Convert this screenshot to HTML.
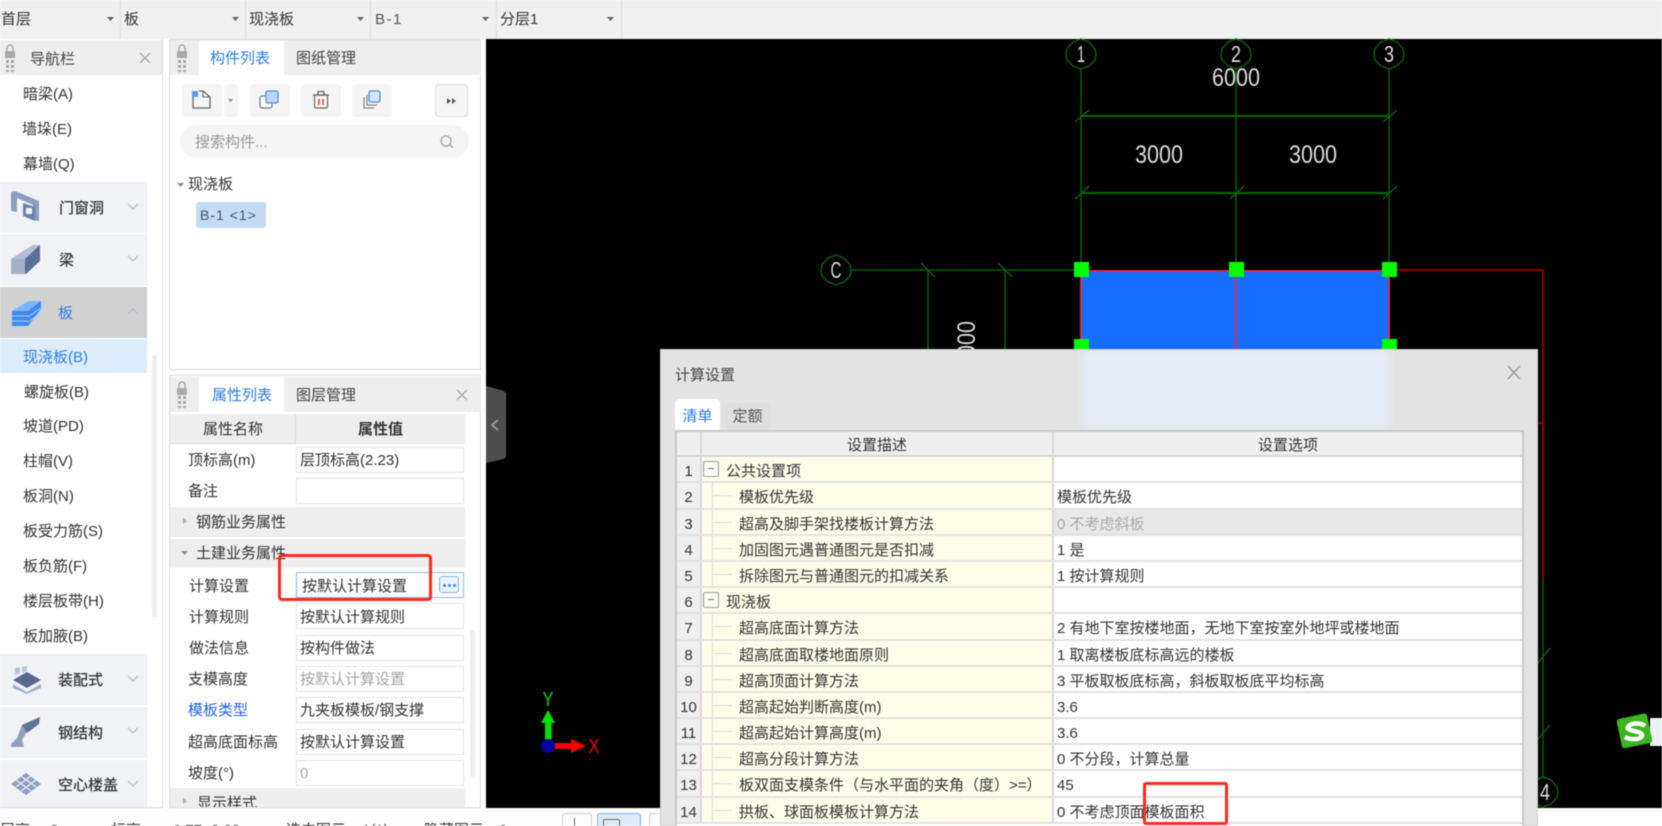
<!DOCTYPE html>
<html lang="zh"><head><meta charset="utf-8"><title>计算设置</title>
<style>
*{box-sizing:border-box}
html,body{margin:0;padding:0;width:1662px;height:826px;overflow:hidden;background:#fff}
html{background:#fff}
body{position:relative;font:15px/20px "Liberation Sans","Noto Sans CJK SC",sans-serif;color:#333;filter:blur(.4px)}
.a{position:absolute;white-space:nowrap}
.t{position:absolute;white-space:nowrap;height:20px;line-height:20px}
svg{position:absolute;overflow:visible}
.sep{position:absolute;top:0;width:1px;height:39px;background:#ddd}
.cat{position:absolute;left:0;width:147px;height:51px;background:#f0f2f6}
.inp{position:absolute;left:296px;width:168px;height:26px;background:#fff;border:1.5px solid #e4e4e4;padding-left:3px;line-height:25px;white-space:nowrap}
.grp{position:absolute;left:170px;width:295px;background:#eee}
.btn{position:absolute;top:84px;height:33px;background:#f5f5f5;border-radius:4px}
.row{display:flex;height:26.2px;border-bottom:2px solid #e2e2e2;line-height:29px;white-space:nowrap;overflow:hidden}
.n{width:25px;background:#efefef;border-right:2px solid #d6d6d6;text-align:center;flex:none}
.d{width:352px;background:#fffde8;border-right:2px solid #d6d6d6;flex:none;padding-left:37px;position:relative}
.d.g{padding-left:24px}
.d:not(.g):before{content:"";position:absolute;left:10px;top:12px;width:20px;height:1px;background:#ddd}
.d:not(.g):after{content:"";position:absolute;left:10px;top:0;width:1px;height:27px;background:#ddd}
.d.g i{position:absolute;left:1px;top:4px;width:16px;height:16px;border:1px solid #999;border-radius:2px;background:#fdfdf6}
.d.g i:before{content:"";position:absolute;left:4px;top:6px;width:6px;height:1px;background:#666}
.v{flex:1;background:#fff;padding-left:3px}
</style></head><body>

<!-- top bar -->
<div class="a" style="left:0;top:0;width:1662px;height:39px;background:#f0f0f0"></div>
<div class="sep" style="left:120px"></div><div class="sep" style="left:245px"></div><div class="sep" style="left:370px"></div><div class="sep" style="left:496px"></div><div class="sep" style="left:621px"></div>
<div class="t" style="left:1px;top:10px">首层</div>
<div class="t" style="left:124px;top:10px">板</div>
<div class="t" style="left:249px;top:10px">现浇板</div>
<div class="t" style="left:375px;top:10px;letter-spacing:1.5px;color:#555">B-1</div>
<div class="t" style="left:500px;top:10px">分层1</div>
<svg width="1662" height="39" style="left:0;top:0"><g fill="#5d6470">
<path d="M107 17h7l-3.500 4z"/><path d="M232 17h7l-3.500 4z"/><path d="M357 17h7l-3.500 4z"/><path d="M482 17h7l-3.500 4z"/><path d="M607 17h7l-3.500 4z"/></g></svg>

<!-- CAD viewport -->
<div class="a" style="left:486px;top:39px;width:1176px;height:769px;background:#000"></div>
<svg width="1662" height="826" style="left:0;top:0">
<g fill="none" stroke="#0b680b" stroke-width="1.300">
<polygon points="1081,39 1089,42 1095,49 1096,54 1095,60 1089,66 1081,69 1073,66 1067,60 1066,54 1067,49 1073,42"/>
<polygon points="1236,39 1244,42 1250,49 1251,54 1250,60 1244,66 1236,69 1228,66 1222,60 1221,54 1222,49 1228,42"/>
<polygon points="1389,39 1397,42 1403,49 1404,54 1403,60 1397,66 1389,69 1381,66 1375,60 1374,54 1375,49 1381,42"/>
<polygon points="836,255 844,258 850,265 851,270 850,276 844,282 836,285 828,282 822,276 821,270 822,265 828,258"/>
<polygon points="1543,777 1551,780 1557,787 1558,792 1557,798 1551,804 1543,807 1535,804 1529,798 1528,792 1529,787 1535,780"/>
<path d="M1081 69V270M1236 69V270M1389 69V270M851 270H1081M928 270V350M1005 270V350"/>
<path d="M1081 116H1389M1081 193H1389" stroke-width="2"/>
<path d="M1075 122L1089 110M1383 122L1397 110M1075 199L1089 186M1230 199L1244 186M1383 199L1397 186M921 263L935 277M998 263L1012 277"/>
<path d="M1543 578V777M1537 664L1550 648M1537 740L1550 725"/>
</g>
<g fill="#dcdcdc" font-family="Liberation Sans,sans-serif" font-size="25" text-anchor="middle">
<text x="1081" y="62" font-size="23" textLength="8" lengthAdjust="spacingAndGlyphs">1</text><text x="1236" y="62" font-size="23" textLength="10" lengthAdjust="spacingAndGlyphs">2</text><text x="1389" y="62" font-size="23" textLength="10" lengthAdjust="spacingAndGlyphs">3</text><text x="836" y="278" font-size="23" textLength="11" lengthAdjust="spacingAndGlyphs">C</text><text x="1545" y="800" font-size="23" textLength="10" lengthAdjust="spacingAndGlyphs">4</text>
<text x="1236" y="86" textLength="48" lengthAdjust="spacingAndGlyphs">6000</text>
<text x="1159" y="163" textLength="48" lengthAdjust="spacingAndGlyphs">3000</text>
<text x="1313" y="163" textLength="48" lengthAdjust="spacingAndGlyphs">3000</text>
<text transform="translate(975,347) rotate(-90)" text-anchor="start" x="-22" textLength="48" lengthAdjust="spacingAndGlyphs">6000</text>
</g>
<rect x="1081" y="270" width="308" height="82" fill="#166dff"/>
<path d="M1081 271H1389M1081 270V352M1236 270V352M1389 270V352" fill="none" stroke="#d5304a" stroke-width="2"/>
<path d="M1389 270H1543V578M1538 423H1543" fill="none" stroke="#b00000" stroke-width="1.500"/>
<g fill="#00ff00"><rect x="1074" y="262" width="15" height="15"/><rect x="1229" y="262" width="15" height="15"/><rect x="1382" y="262" width="15" height="15"/><rect x="1074" y="339" width="15" height="15"/><rect x="1382" y="339" width="15" height="15"/></g>
<!-- axes -->
<path d="M545 746V723H541L548 710L555 723H551.500V746z" fill="#00e000"/>
<path d="M548 743H571V739L586 746L571 753V749H548z" fill="#f00000"/>
<circle cx="548" cy="746" r="7" fill="#0000a0"/>
<text x="548" y="706" fill="#00d000" font-family="Liberation Sans,sans-serif" font-size="20" text-anchor="middle" textLength="11" lengthAdjust="spacingAndGlyphs">Y</text>
<text x="594" y="753" fill="#f00000" font-family="Liberation Sans,sans-serif" font-size="20" text-anchor="middle" textLength="11" lengthAdjust="spacingAndGlyphs">X</text>
<path d="M486 386L504 391L506 393V457L504 459L486 463z" fill="#4d4d4d"/>
<path d="M498 420L492 425L498 430" fill="none" stroke="#9a9a9a" stroke-width="1.800"/>
<!-- S logo -->
<rect x="1650" y="718" width="12" height="28" fill="#eef2f7"/>
<rect x="1619" y="716" width="31" height="30" rx="3" fill="#3cb521" transform="rotate(-12 1634 731)"/>
<path d="M1645 726C1640 722 1630 723 1628 727C1626 732 1643 730 1642 736C1640 740 1630 740 1625 737" fill="none" stroke="#fff" stroke-width="4.500"/>
</svg>

<!-- nav panel -->
<div class="a" style="left:0;top:39px;width:163px;height:769px;background:#fff;border-right:1.500px solid #ddd;border-bottom:1.500px solid #ddd"></div>
<div class="a" style="left:0;top:40px;width:162px;height:35px;background:#eee"></div>
<div class="t" style="left:30px;top:50px;color:#444">导航栏</div>
<div class="t" style="left:23px;top:85px">暗梁(A)</div>
<div class="t" style="left:22px;top:120px">墙垛(E)</div>
<div class="t" style="left:23px;top:155px">幕墙(Q)</div>
<div class="cat" style="top:182px"></div><div class="t" style="left:59px;top:199px;font-weight:500">门窗洞</div>
<div class="cat" style="top:234px"></div><div class="t" style="left:59px;top:251px;font-weight:500">梁</div>
<div class="cat" style="top:287px;background:#d1d1d1"></div><div class="t" style="left:58px;top:304px;color:#2f7de1">板</div>
<div class="a" style="left:0;top:339px;width:147px;height:34px;background:#ddecfd"></div>
<div class="t" style="left:23px;top:348px;color:#2f7de1">现浇板(B)</div>
<div class="t" style="left:24px;top:383px">螺旋板(B)</div>
<div class="t" style="left:23px;top:417px">坡道(PD)</div>
<div class="t" style="left:23px;top:452px">柱帽(V)</div>
<div class="t" style="left:23px;top:487px">板洞(N)</div>
<div class="t" style="left:23px;top:522px">板受力筋(S)</div>
<div class="t" style="left:23px;top:557px">板负筋(F)</div>
<div class="t" style="left:23px;top:592px">楼层板带(H)</div>
<div class="t" style="left:23px;top:627px">板加腋(B)</div>
<div class="a" style="left:152px;top:355px;width:5px;height:262px;background:#eee;border-radius:3px"></div>
<div class="cat" style="top:654px"></div><div class="t" style="left:58px;top:671px;font-weight:500">装配式</div>
<div class="cat" style="top:707px"></div><div class="t" style="left:58px;top:724px;font-weight:500">钢结构</div>
<div class="cat" style="top:760px;height:47px"></div><div class="t" style="left:58px;top:776px;font-weight:500">空心楼盖</div>

<svg width="170" height="808" style="left:0;top:0">
<g fill="none" stroke="#b9bfcc" stroke-width="1.300"><path d="M128 204l5 5 5-5M128 256l5 5 5-5M128 314l5-5 5 5M128 676l5 5 5-5M128 728l5 5 5-5M128 781l5 5 5-5"/></g>
<!-- door/window -->
<path d="M11 192L15 191L39 201V221L34 220L33 205L17 198L17 212L11 211z" fill="#8b9ec0"/><path d="M23 203L35 207V221L23 216z" fill="#6d82a8"/><rect x="26" y="208" width="6" height="6" fill="#eef1f6"/>
<!-- beam -->
<path d="M11 259L33 245L40 245L40 261L26 274H11z" fill="#5a6f99"/><path d="M11 259L33 245L40 245L25 259z" fill="#b6bfd2"/><path d="M11 259H25V274H11z" fill="#a5b0c8"/>
<!-- slab -->
<path d="M12 311L29 301H41L41 309L28 326H12z" fill="#3d8bf0"/><path d="M12 311L29 301H41L28 311z" fill="#7cb5f7"/><path d="M12 316H28M12 321H28M28 317L41 308M28 322L41 313" stroke="#a8cdf8" stroke-width="1"/>
<!-- prefab -->
<path d="M13 680L27 672L41 680L27 688z" fill="#5a6a8c"/><path d="M13 684L27 692L41 684V688L27 694L13 688z" fill="#9fb0cc"/><path d="M15 668L20 667V673L15 675zM22 667L27 666V671L22 673z" fill="#b5c3da"/>
<!-- steel -->
<path d="M11 744L17 738L22 725L40 717L38 722L28 730L22 740L24 747H11z" fill="#8fa0bd"/><path d="M22 725L40 717L39 724L27 733z" fill="#5f7297"/>
<!-- hollow -->
<path d="M11 784L26 773L41 784L26 795z" fill="#8d9fc0"/><path d="M16 780L31 791M21 776L36 787M21 791L36 780M16 787L31 776" stroke="#e6ebf4" stroke-width="1.300"/>
<!-- close x -->
<g stroke="#aaa" stroke-width="1.400"><path d="M140 53L150 63M150 53L140 63"/><path d="M456 53L466 63M466 53L456 63"/></g>
<!-- lock nav -->
<g fill="#a8a8a8"><rect x="5" y="51" width="10" height="7" rx="1"/><path d="M7 51V48a3 3 0 0 1 6 0V51" fill="none" stroke="#a8a8a8" stroke-width="1.400"/><rect x="6" y="60" width="3" height="3"/><rect x="11" y="60" width="3" height="3"/><rect x="6" y="65" width="3" height="3"/><rect x="11" y="65" width="3" height="3"/><rect x="6" y="70" width="3" height="2"/><rect x="11" y="70" width="3" height="2"/></g>
</svg>

<!-- component panel -->
<div class="a" style="left:169px;top:39px;width:312px;height:331px;background:#fff;border:1.500px solid #ddd"></div>
<div class="a" style="left:170px;top:40px;width:311px;height:35px;background:#eee"></div>
<div class="a" style="left:199px;top:41px;width:85px;height:34px;background:#fff"></div>
<div class="t" style="left:210px;top:49px;color:#2f7de1">构件列表</div>
<div class="t" style="left:296px;top:49px;color:#444">图纸管理</div>
<div class="btn" style="left:182px;width:40px"></div><div class="btn" style="left:224px;width:14px"></div>
<div class="btn" style="left:250px;width:40px"></div><div class="btn" style="left:301px;width:40px"></div><div class="btn" style="left:352px;width:40px"></div>
<div class="btn" style="left:435px;width:33px;border:1px solid #ddd"></div>
<div class="a" style="left:180px;top:125px;width:289px;height:33px;border-radius:17px;background:#f5f5f5"></div>
<div class="t" style="left:195px;top:133px;color:#999">搜索构件...</div>
<div class="t" style="left:188px;top:175px">现浇板</div>
<div class="a" style="left:196px;top:202px;width:70px;height:26px;background:#c3dcf3;border-radius:3px;line-height:26px;padding-left:4px;font-size:14px;letter-spacing:1px;color:#456">B-1 &lt;1&gt;</div>

<svg width="480" height="240" style="left:0;top:0">
<g fill="#a8a8a8"><rect x="177" y="51" width="10" height="7" rx="1"/><path d="M179 51V48a3 3 0 0 1 6 0V51" fill="none" stroke="#a8a8a8" stroke-width="1.400"/><rect x="178" y="60" width="3" height="3"/><rect x="183" y="60" width="3" height="3"/><rect x="178" y="65" width="3" height="3"/><rect x="183" y="65" width="3" height="3"/><rect x="178" y="70" width="3" height="2"/><rect x="183" y="70" width="3" height="2"/></g>
<!-- new -->
<path d="M193 97V108H210V97L203 91H199" fill="none" stroke="#666" stroke-width="1.300"/><path d="M203 91V97H210" fill="none" stroke="#666" stroke-width="1.100"/><rect x="192" y="91" width="6" height="6" fill="#5a9bf2"/>
<path d="M228 99h5l-2.500 3z" fill="#888"/>
<!-- copy -->
<rect x="260" y="96" width="12" height="12" rx="2" fill="#fff" stroke="#777" stroke-width="1.200"/><rect x="266" y="91" width="12" height="12" rx="1.500" fill="#bcd6f7" stroke="#4a8ff0" stroke-width="1.300"/>
<!-- delete -->
<path d="M313 95H329M318 95V91.500H324V95" fill="none" stroke="#666" stroke-width="1.200"/><rect x="314.500" y="95" width="13" height="13" rx="1.500" fill="none" stroke="#666" stroke-width="1.200"/><path d="M319 99V105M323 99V105" stroke="#e2403a" stroke-width="1.500"/>
<!-- copy2 -->
<path d="M364 97V108H374M367 95V105H377" fill="none" stroke="#888" stroke-width="1.200"/><rect x="369" y="91" width="11" height="11" rx="1.500" fill="#d6e6fb" stroke="#4a8ff0" stroke-width="1.300"/>
<path d="M447 98l4 3-4 3zM452 98l4 3-4 3z" fill="#555"/>
<circle cx="446" cy="141" r="5" fill="none" stroke="#aaa" stroke-width="1.500"/><path d="M450 145l3 3" stroke="#aaa" stroke-width="1.500"/>
<path d="M177 183h7l-3.500 4z" fill="#888"/>
</svg>

<!-- property panel -->
<div class="a" style="left:169px;top:375px;width:312px;height:433px;background:#fff;border:1.500px solid #ddd"></div>
<div class="a" style="left:170px;top:377px;width:311px;height:35px;background:#eee"></div>
<div class="a" style="left:199px;top:377px;width:85px;height:35px;background:#fff"></div>
<div class="t" style="left:212px;top:386px;color:#2f7de1">属性列表</div>
<div class="t" style="left:296px;top:386px;color:#444">图层管理</div>
<div class="a" style="left:170px;top:414px;width:295px;height:30px;background:#eee;border-bottom:1.500px solid #ddd"></div>
<div class="a" style="left:295px;top:414px;width:1px;height:30px;background:#ddd"></div>
<div class="t" style="left:203px;top:420px">属性名称</div>
<div class="t" style="left:358px;top:420px;font-weight:700">属性值</div>
<div class="t" style="left:188px;top:451px">顶标高(m)</div><div class="inp" style="top:447px">层顶标高(2.23)</div>
<div class="t" style="left:188px;top:482px">备注</div><div class="inp" style="top:478px"></div>
<div class="grp" style="top:507px;height:30px"></div><div class="t" style="left:196px;top:513px">钢筋业务属性</div>
<div class="grp" style="top:539px;height:29px"></div><div class="t" style="left:196px;top:544px">土建业务属性</div>
<div class="t" style="left:189px;top:577px">计算设置</div><div class="inp" style="top:572px;border-color:#8ab6f0;padding-left:5px;line-height:27px">按默认计算设置</div>
<div class="a" style="left:439px;top:576px;width:20px;height:17px;border:1.500px solid #7fb0ef;border-radius:3px;background:#eaf2fd"></div>
<div class="a" style="left:443px;top:584px;width:2.500px;height:2.500px;border-radius:50%;background:#4a8ff0;box-shadow:5px 0 #4a8ff0,10px 0 #4a8ff0"></div>
<div class="t" style="left:189px;top:608px">计算规则</div><div class="inp" style="top:603px;line-height:27px">按默认计算规则</div>
<div class="t" style="left:189px;top:639px">做法信息</div><div class="inp" style="top:635px">按构件做法</div>
<div class="t" style="left:188px;top:670px">支模高度</div><div class="inp" style="top:666px;color:#a5a5a5">按默认计算设置</div>
<div class="t" style="left:188px;top:701px;color:#2266ee">模板类型</div><div class="inp" style="top:697px">九夹板模板/钢支撑</div>
<div class="t" style="left:188px;top:733px">超高底面标高</div><div class="inp" style="top:729px">按默认计算设置</div>
<div class="t" style="left:188px;top:764px">坡度(°)</div><div class="inp" style="top:760px;color:#aaa">0</div>
<div class="a" style="left:170px;top:788px;width:295px;height:19px;background:#eee;overflow:hidden"><div class="t" style="left:27px;top:6px">显示样式</div></div>
<div class="a" style="left:470px;top:630px;width:5px;height:147px;background:#eee;border-radius:3px"></div>
<svg width="480" height="808" style="left:0;top:0">
<g fill="#a8a8a8"><rect x="177" y="388" width="10" height="7" rx="1"/><path d="M179 388V385a3 3 0 0 1 6 0V388" fill="none" stroke="#a8a8a8" stroke-width="1.400"/><rect x="178" y="396" width="3" height="3"/><rect x="183" y="396" width="3" height="3"/><rect x="178" y="401" width="3" height="3"/><rect x="183" y="401" width="3" height="3"/><rect x="178" y="406" width="3" height="2"/><rect x="183" y="406" width="3" height="2"/></g>
<path d="M457 390L467 400M467 390L457 400" stroke="#aaa" stroke-width="1.400"/>
<path d="M183 518l4 3-4 3zM183 798l4 3-4 3z" fill="#aaa"/><path d="M181 551h7l-3.500 4z" fill="#888"/>
</svg>
<div class="a" style="left:278px;top:554px;width:154px;height:47px;border:3px solid #ff2a1e;border-radius:4px"></div>

<!-- status bar -->
<div class="a" style="left:0;top:808px;width:660px;height:18px;background:#fdfdfd;overflow:hidden">
<div class="t" style="left:0;top:13px">层高:</div><div class="t" style="left:50px;top:13px">3</div>
<div class="t" style="left:111px;top:13px">标高:</div><div class="t" style="left:168px;top:13px">-0.77~2.23</div>
<div class="t" style="left:286px;top:13px">选中图元:</div><div class="t" style="left:362px;top:13px">1(1)</div>
<div class="t" style="left:424px;top:13px">隐藏图元:</div><div class="t" style="left:499px;top:13px">0</div>
<div class="a" style="left:562px;top:5px;width:30px;height:24px;border:1.500px solid #ccc;border-radius:3px"></div>
<div class="a" style="left:574px;top:10px;width:1px;height:10px;background:#666"></div>
<div class="a" style="left:597px;top:5px;width:44px;height:24px;border:1.500px solid #7fb0ef;border-radius:3px;background:#dcebfc"></div>
<div class="a" style="left:603px;top:11px;width:17px;height:12px;border:1px solid #666;border-radius:2px"></div>
<div class="a" style="left:649px;top:5px;width:24px;height:24px;border:1.500px solid #ccc;border-radius:3px"></div>
</div>

<!-- dialog -->
<div class="a" style="left:660px;top:349px;width:878px;height:477px;background:#e3e3e3;border:1px solid #cfcfcf;overflow:hidden">
<div class="a" style="left:422px;top:0;width:306px;height:78px;background:#e6ecf7;filter:blur(4px)"></div>
</div>
<div class="t" style="left:675px;top:366px;color:#444">计算设置</div>
<svg width="1662" height="400" style="left:0;top:0"><path d="M1508 366L1520 379M1520 366L1508 379" stroke="#999" stroke-width="1.500"/></svg>
<div class="a" style="left:675px;top:399px;width:45px;height:32px;background:#fff;border-radius:4px 4px 0 0;text-align:center;line-height:35px;color:#2f7de1">清单</div>
<div class="a" style="left:725px;top:403px;width:45px;height:27px;background:#dfdfdf;border-radius:4px 4px 0 0;text-align:center;line-height:27px;color:#555">定额</div>
<div class="a" style="left:675px;top:430px;width:849px;height:396px;background:#fff;border:2px solid #c9c9c9;border-bottom:0;overflow:hidden;font-size:15px">
<div style="display:flex;height:25.200px;background:#efefef;border-bottom:2px solid #d6d6d6;line-height:28px;overflow:hidden">
<div class="n"></div><div style="width:352px;border-right:2px solid #d6d6d6;text-align:center;flex:none">设置描述</div><div style="flex:1;text-align:center">设置选项</div></div>
<div class="row"><div class="n">1</div><div class="d g"><i></i>公共设置项</div><div class="v"></div></div>
<div class="row"><div class="n">2</div><div class="d">模板优先级</div><div class="v">模板优先级</div></div>
<div class="row"><div class="n">3</div><div class="d">超高及脚手架找楼板计算方法</div><div class="v" style="background:#e8e8e8;color:#aaa">0 不考虑斜板</div></div>
<div class="row"><div class="n">4</div><div class="d">加固图元遇普通图元是否扣减</div><div class="v">1 是</div></div>
<div class="row"><div class="n">5</div><div class="d">拆除图元与普通图元的扣减关系</div><div class="v">1 按计算规则</div></div>
<div class="row"><div class="n">6</div><div class="d g"><i></i>现浇板</div><div class="v"></div></div>
<div class="row"><div class="n">7</div><div class="d">超高底面计算方法</div><div class="v">2 有地下室按楼地面，无地下室按室外地坪或楼地面</div></div>
<div class="row"><div class="n">8</div><div class="d">超高底面取楼地面原则</div><div class="v">1 取离楼板底标高远的楼板</div></div>
<div class="row"><div class="n">9</div><div class="d">超高顶面计算方法</div><div class="v">3 平板取板底标高，斜板取板底平均标高</div></div>
<div class="row"><div class="n">10</div><div class="d">超高起始判断高度(m)</div><div class="v">3.6</div></div>
<div class="row"><div class="n">11</div><div class="d">超高起始计算高度(m)</div><div class="v">3.6</div></div>
<div class="row"><div class="n">12</div><div class="d">超高分段计算方法</div><div class="v">0 不分段，计算总量</div></div>
<div class="row"><div class="n">13</div><div class="d">板双面支模条件（与水平面的夹角（度）&gt;=）</div><div class="v">45</div></div>
<div class="row"><div class="n">14</div><div class="d">拱板、球面板模板计算方法</div><div class="v">0 不考虑顶面模板面积</div></div>
</div>
<div class="a" style="left:1143px;top:782px;width:85px;height:43px;border:3px solid #ff2a1e;border-radius:3px"></div>
</body></html>
